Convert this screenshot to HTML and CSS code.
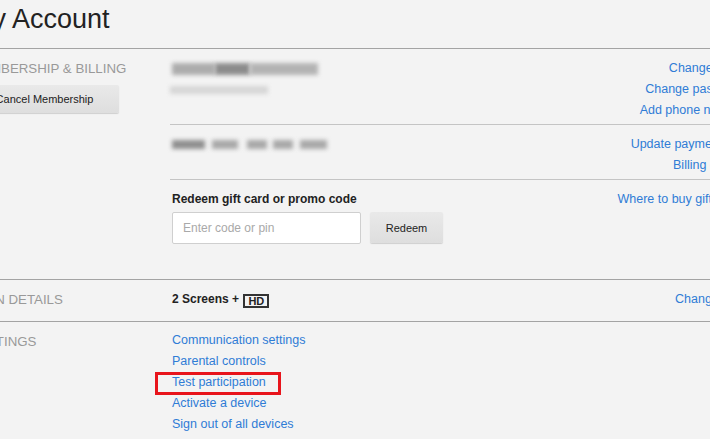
FILE: index.html
```html
<!DOCTYPE html>
<html lang="en">
<head>
    <meta charset="UTF-8">
    <meta name="viewport" content="width=device-width, initial-scale=1.0">
    <title>My Account</title>
    <link rel="stylesheet" href="styles.css">
</head>
<body>
    <div class="page">
        <h1 class="page-title">My Account</h1>

        <section class="account-section">
            <div class="section-label">
                <h2>Membership &amp; Billing</h2>
                <button class="btn btn-cancel">Cancel Membership</button>
            </div>
            <div class="section-body">
                <div class="section-item">
                    <div class="item-info">
                        <div class="blur-row">
                            <span class="blur email-a"></span><span class="blur email-b"></span><span class="blur email-c"></span>
                        </div>
                        <div class="blur-row">
                            <span class="blur phone"></span>
                        </div>
                    </div>
                    <div class="item-links">
                        <a href="#">Change email</a>
                        <a href="#">Change password</a>
                        <a href="#">Add phone number</a>
                    </div>
                </div>
                <div class="section-item">
                    <div class="item-info">
                        <div class="blur-row">
                            <span class="blur card c1"></span><span class="blur card c2"></span><span class="blur card c3"></span><span class="blur card c4"></span><span class="blur card c5"></span>
                        </div>
                    </div>
                    <div class="item-links">
                        <a href="#">Update payment info</a>
                        <a href="#">Billing details</a>
                    </div>
                </div>
                <div class="section-item">
                    <div class="item-info">
                        <div class="redeem-title">Redeem gift card or promo code</div>
                        <div class="redeem-form">
                            <input type="text" placeholder="Enter code or pin">
                            <button class="btn btn-redeem">Redeem</button>
                        </div>
                    </div>
                    <div class="item-links">
                        <a href="#">Where to buy gift cards</a>
                    </div>
                </div>
            </div>
        </section>

        <section class="account-section">
            <div class="section-label">
                <h2>Plan Details</h2>
            </div>
            <div class="section-body">
                <div class="section-item">
                    <div class="item-info plan">
                        2 Screens + <span class="hd">HD</span>
                    </div>
                    <div class="item-links">
                        <a href="#">Change plan</a>
                    </div>
                </div>
            </div>
        </section>

        <section class="account-section">
            <div class="section-label">
                <h2>Settings</h2>
            </div>
            <div class="section-body">
                <div class="section-item settings-item">
                    <div class="item-info settings">
                        <a href="#">Communication settings</a>
                        <a href="#">Parental controls</a>
                        <a href="#" class="highlight">Test participation</a>
                        <a href="#">Activate a device</a>
                        <a href="#">Sign out of all devices</a>
                    </div>
                </div>
            </div>
        </section>
    </div>
</body>
</html>
```

FILE: styles.css
```css
body {
    margin: 0;
    background-color: #f3f3f3;
    font-family: "Liberation Sans", Arial, sans-serif;
    color: #333;
    overflow: hidden;
}
.page {
    width: 776px;
    margin-left: -30px;
}
.page-title {
    margin: 0 0 13px;
    padding-top: 3px;
    font-size: 27px;
    line-height: 32px;
    font-weight: normal;
    color: #222;
}
.account-section {
    display: flex;
    border-top: 1px solid #a3a3a3;
    padding-bottom: 8px;
}
.section-label {
    width: 200px;
    flex-shrink: 0;
    padding-top: 9px;
}
.section-label h2 {
    margin: 0;
    font-size: 13.3px;
    line-height: 21px;
    font-weight: normal;
    text-transform: uppercase;
    color: #999;
}
.btn {
    font-family: "Liberation Sans", Arial, sans-serif;
    font-size: 11px;
    color: #222;
    background: linear-gradient(#e9e9e9, #dedede);
    border: none;
    border-radius: 2px;
    box-shadow: 0 1px 1px rgba(0, 0, 0, 0.15);
    cursor: pointer;
}
.btn-cancel {
    display: block;
    width: 149px;
    height: 28px;
    margin-top: 6px;
}
.section-body {
    flex: 1;
}
.section-item {
    display: flex;
    justify-content: space-between;
    padding: 9px 0 3px 2px;
}
.section-item + .section-item {
    border-top: 1px solid #c4c4c4;
}
.settings-item {
    padding-top: 8px;
}
.item-links {
    text-align: right;
}
.item-links a,
.settings a {
    display: block;
    font-size: 12.5px;
    line-height: 21px;
    color: #2f7cd6;
    text-decoration: none;
}
.blur-row {
    height: 21px;
    display: flex;
    align-items: center;
}
.blur {
    display: inline-block;
    filter: blur(2px);
}
.email-a {
    width: 43px;
    height: 12px;
    background-color: #acacac;
}
.email-b {
    width: 35px;
    height: 12px;
    background-color: #8c8c8c;
}
.email-c {
    width: 68px;
    height: 12px;
    background-color: #b3b3b3;
}
.phone {
    width: 98px;
    height: 8px;
    margin-left: -2px;
    background-color: #d6d6d6;
}
.card {
    height: 9px;
    background-color: #a8a8a8;
}
.c1 { width: 33px; margin-right: 7px; background-color: #8f8f8f; }
.c2 { width: 26px; margin-right: 9px; }
.c3 { width: 20px; margin-right: 6px; }
.c4 { width: 20px; margin-right: 7px; }
.c5 { width: 27px; }
.redeem-title {
    font-size: 12px;
    line-height: 21px;
    font-weight: bold;
    color: #222;
}
.redeem-form {
    display: flex;
    gap: 9px;
    margin-top: 2px;
    margin-bottom: 24px;
}
.redeem-form input {
    width: 189px;
    height: 32px;
    box-sizing: border-box;
    padding: 0 10px;
    border: 1px solid #cfcfcf;
    border-radius: 2px;
    background-color: white;
    font-family: "Liberation Sans", Arial, sans-serif;
    font-size: 12px;
}
.redeem-form input::placeholder {
    color: #a9a9a9;
}
.btn-redeem {
    width: 73px;
    height: 31px;
}
.plan {
    font-size: 12px;
    line-height: 21px;
    font-weight: bold;
    color: #222;
}
.hd {
    display: inline-block;
    box-sizing: border-box;
    height: 14px;
    padding: 0 3px;
    margin-left: 1px;
    border: 2px solid #333;
    font-size: 11px;
    line-height: 10px;
    vertical-align: -2px;
}
.highlight {
    position: relative;
}
.highlight::after {
    content: '';
    position: absolute;
    left: -17px;
    top: 0;
    width: 126px;
    height: 23px;
    box-sizing: border-box;
    border: 3px solid #e8141b;
}
```
